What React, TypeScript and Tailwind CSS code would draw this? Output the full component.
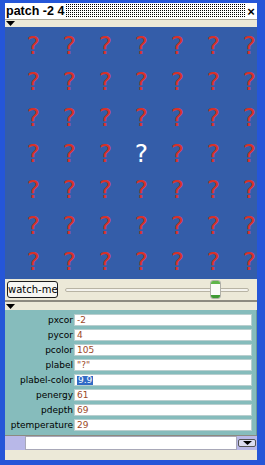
import React from 'react';

const ROWS = 7;
const COLS = 7;

const fields: { name: string; value: string; selected?: boolean }[] = [
  { name: 'pxcor', value: '-2' },
  { name: 'pycor', value: '4' },
  { name: 'pcolor', value: '105' },
  { name: 'plabel', value: '"?"' },
  { name: 'plabel-color', value: '9.9', selected: true },
  { name: 'penergy', value: '61' },
  { name: 'pdepth', value: '69' },
  { name: 'ptemperature', value: '29' },
];

const dejavu = { fontFamily: '"DejaVu Sans", Verdana, sans-serif' };

function DownTriangle() {
  return (
    <svg width="9" height="5" viewBox="0 0 9 5" className="block">
      <path d="M0 0 H9 L4.5 5 Z" fill="#000" />
    </svg>
  );
}

export default function App() {
  return (
    <div
      className="w-[265px] h-[465px] bg-[#2556d8] pt-[3px] pl-[5px] pr-[8px] pb-[5px] overflow-hidden"
      style={{ fontFamily: '"Liberation Sans", Arial, sans-serif' }}
    >
      <div className="flex flex-col h-full bg-[#ece9d8]">
        {/* title bar */}
        <div className="h-[16px] flex items-stretch bg-white">
          <div className="px-[1px] text-[12.5px] leading-[16px] font-bold text-black bg-white whitespace-nowrap">
            patch -2 4
          </div>
          <div className="flex-1 my-[1px] bg-[conic-gradient(#000_25%,#fff_0)] bg-[length:2px_2px]" />
          <div className="w-[12px] flex items-center justify-center text-[13px] font-bold leading-none text-black bg-white">
            ×
          </div>
        </div>
        <div className="h-px bg-[#aca899]" />

        {/* view header */}
        <div className="h-[7px] flex items-start pl-[1px] pt-[1px]">
          <DownTriangle />
        </div>

        {/* world view */}
        <div className="h-[252px] bg-[#345da9] grid grid-cols-[repeat(7,36px)] grid-rows-[repeat(7,36px)] overflow-hidden">
          {Array.from({ length: ROWS * COLS }).map((_, i) => {
            const r = Math.floor(i / COLS);
            const c = i % COLS;
            const here = r === 3 && c === 3;
            return (
              <div
                key={i}
                style={dejavu}
                className={`flex items-center justify-end pr-[1px] text-[25px] leading-none ${
                  here ? 'text-white' : 'text-[#d73229]'
                }`}
              >
                ?
              </div>
            );
          })}
        </div>

        {/* controls */}
        <div className="h-[21px] flex items-center gap-[7px] pl-[2px] pr-[8px]">
          <div
            style={dejavu}
            className="w-[51px] h-[17px] border border-[#1c1c1c] rounded-[3px] bg-[#f6f6f2] flex items-center overflow-hidden whitespace-nowrap text-[10px] leading-none text-black"
          >
            watch-me
          </div>
          <div className="relative flex-1 h-full flex items-center">
            <div className="w-full h-[4px] border border-[#b8b4a4] rounded-[2px] bg-[#f4f3ee]" />
            <div className="absolute left-[145px] top-[1px] w-[11px] h-[19px] rounded-[3px] border border-[#b0b0a8] bg-[#fbfbf8] flex flex-col justify-between">
              <div className="h-[3px] bg-[#5fb54a] rounded-t-[2px]" />
              <div className="h-[3px] bg-[#3f9a33] rounded-b-[2px]" />
            </div>
          </div>
        </div>
        <div className="h-[2px] bg-[#8c8a80]" />

        {/* inspector header */}
        <div className="h-[8px] flex items-start pl-[1px] pt-[2px]">
          <DownTriangle />
        </div>

        {/* variables */}
        <div
          style={dejavu}
          className="h-[125px] bg-[#86bcbc] flex flex-col gap-[3px] pt-[4px] pr-[4px] border-r border-[#6e9a9a]"
        >
          {fields.map((f) => (
            <div key={f.name} className="flex items-center h-[12px]">
              <div className="w-[69px] pr-[1px] text-right text-[9px] leading-none text-black whitespace-nowrap">
                {f.name}
              </div>
              <div className="flex-1 h-[12px] bg-white border border-[#b9cfcf] flex items-center pl-[2px] text-[9px] leading-none text-[#9c4a28]">
                {f.selected ? (
                  <span className="bg-[#316ac5] text-white px-px">{f.value}</span>
                ) : (
                  f.value
                )}
              </div>
            </div>
          ))}
        </div>
        <div className="h-px bg-[#8c8a80]" />

        {/* command line */}
        <div className="h-[14px] flex items-stretch">
          <div className="w-[20px] bg-[#b8b8e8]" />
          <div className="flex-1 bg-white border border-[#a8a8b8]" />
          <div className="w-[20px] flex items-center justify-center bg-[#b8b8e8]">
            <div className="w-[18px] h-[8px] bg-[#dcdcf0] border border-[#555] rounded-[2px] flex items-center justify-center">
              <svg width="9" height="4" viewBox="0 0 9 4">
                <path d="M0 0 H9 L4.5 4 Z" fill="#000" />
              </svg>
            </div>
          </div>
        </div>
        <div className="flex-1 bg-[#ece9d8]" />
      </div>
    </div>
  );
}
